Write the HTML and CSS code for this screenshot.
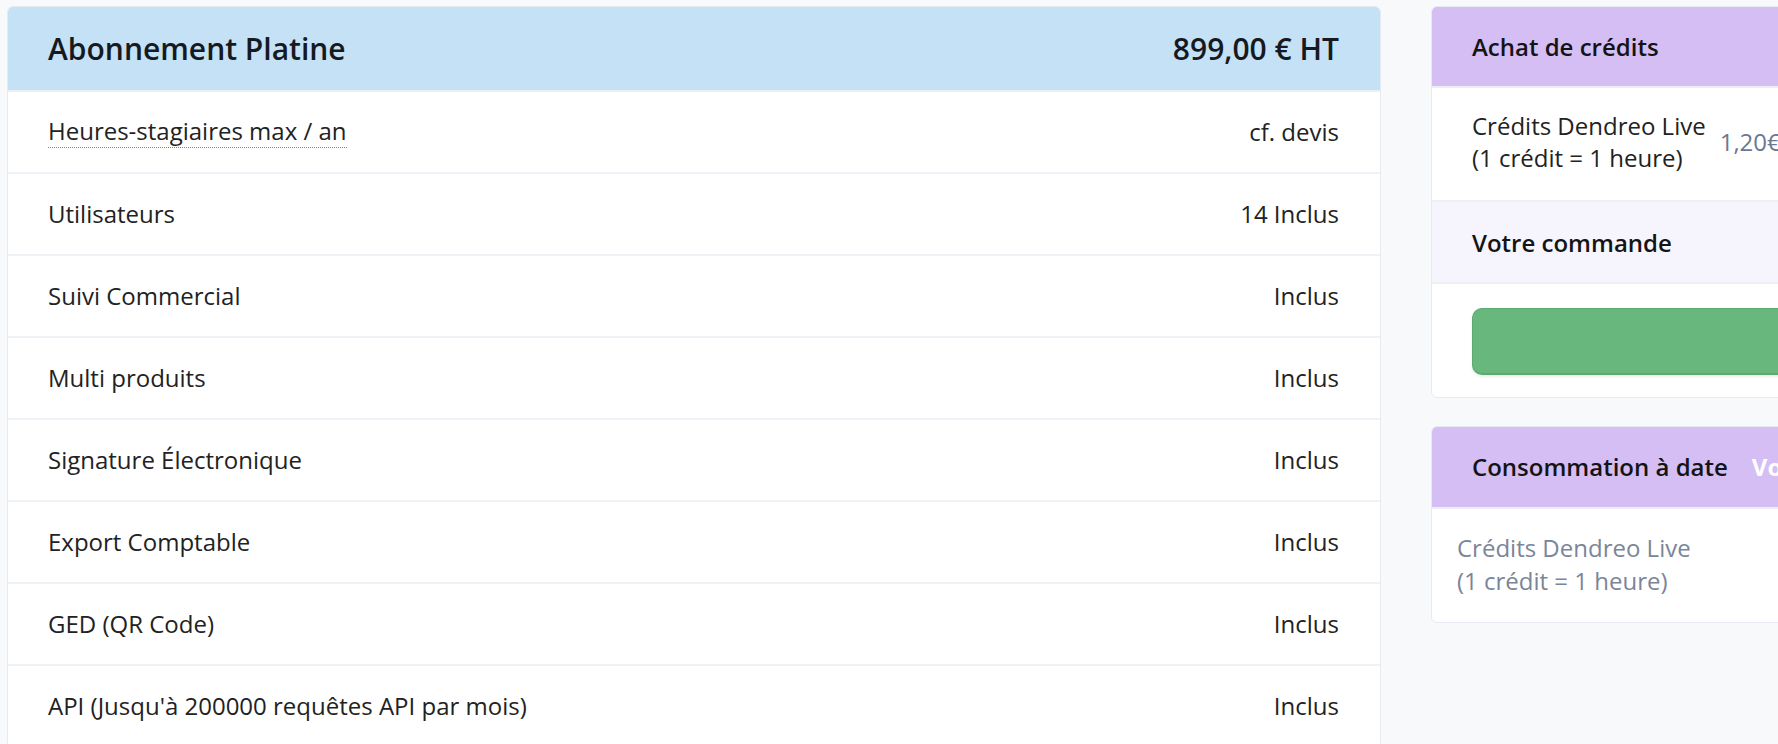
FILE: index.html
```html
<!DOCTYPE html>
<html lang="fr">
<head>
<meta charset="utf-8">
<title>Abonnement</title>
<link rel="stylesheet" href="styles.css">
</head>
<body>
<div class="page">
  <section class="plan">
    <div class="plan-head">
      <span class="plan-name">Abonnement Platine</span>
      <span class="plan-price">899,00 € HT</span>
    </div>
    <div class="plan-row"><span class="hint">Heures-stagiaires max / an</span><span class="val">cf. devis</span></div>
    <div class="plan-row"><span>Utilisateurs</span><span class="val">14 Inclus</span></div>
    <div class="plan-row"><span>Suivi Commercial</span><span class="val">Inclus</span></div>
    <div class="plan-row"><span>Multi produits</span><span class="val">Inclus</span></div>
    <div class="plan-row"><span>Signature Électronique</span><span class="val">Inclus</span></div>
    <div class="plan-row"><span>Export Comptable</span><span class="val">Inclus</span></div>
    <div class="plan-row"><span>GED (QR Code)</span><span class="val">Inclus</span></div>
    <div class="plan-row"><span>API (Jusqu'à 200000 requêtes API par mois)</span><span class="val">Inclus</span></div>
  </section>
  <aside class="side">
    <div class="card">
      <div class="card-head">Achat de crédits</div>
      <div class="credit-row">
        <div class="credit-label">Crédits Dendreo Live<br>(1 crédit = 1 heure)</div>
        <div class="credit-price">1,20€</div>
      </div>
      <div class="order-head">Votre commande</div>
      <div class="order-body"><button class="order-btn" type="button">Commander</button></div>
    </div>
    <div class="card card-usage">
      <div class="card-head">Consommation à date <a class="head-link" href="#">Voir le détail</a></div>
      <div class="usage-body">Crédits Dendreo Live<br>(1 crédit = 1 heure)</div>
    </div>
  </aside>
</div>
</body>
</html>
```

FILE: styles.css
```css
html, body {
  margin: 0;
  padding: 0;
  overflow: hidden;
  background: #f7f9fb;
  font-family: "Open Sans", "Liberation Sans", sans-serif;
  color: #212529;
}

.page {
  display: flex;
  align-items: flex-start;
  gap: 50px;
  padding: 6px 0 0 7px;
}

/* Left plan table */
.plan {
  flex: 0 0 1374px;
  box-sizing: border-box;
  background: #fff;
  border: 1px solid #e7ebf1;
  border-radius: 6px;
  overflow: hidden;
}

.plan-head {
  display: flex;
  justify-content: space-between;
  align-items: center;
  height: 83px;
  padding: 0 41px 0 40px;
  background: #c5e1f6;
  border-bottom: 2px solid #eceef5;
  font-size: 30px;
  font-weight: 600;
  color: #161a1f;
}

.plan-row {
  display: flex;
  justify-content: space-between;
  align-items: center;
  height: 78px;
  padding: 0 41px 2px 40px;
  border-bottom: 2px solid #eef2f7;
  font-size: 24px;
  color: #222;
}

.hint {
  border-bottom: 1px dotted #74819b;
}

/* Right column */
.side {
  flex: 0 0 900px;
  display: flex;
  flex-direction: column;
  gap: 28px;
}

.card {
  background: #fff;
  border: 1px solid #e7ebf1;
  border-radius: 6px;
  overflow: hidden;
}

.card-head {
  display: flex;
  align-items: center;
  height: 79px;
  padding: 0 40px;
  background: #d4bef4;
  border-bottom: 2px solid #eceef5;
  font-size: 24px;
  font-weight: 600;
  color: #141414;
}

.card-usage .card-head {
  height: 80px;
  padding-bottom: 2px;
  height: 78px;
}

.head-link {
  margin-left: 24px;
  color: #fff;
  font-weight: 700;
  text-decoration: none;
}

.credit-row {
  display: flex;
  align-items: center;
  gap: 14px;
  padding: 22px 40px 26px;
  border-bottom: 2px solid #eef0f6;
  font-size: 24px;
  line-height: 32px;
  color: #222;
}

.credit-price {
  color: #6b7891;
}

.order-head {
  display: flex;
  align-items: center;
  height: 80px;
  padding: 0 40px;
  background: #f6f4fd;
  border-bottom: 2px solid #eef0f5;
  font-size: 24px;
  font-weight: 600;
  color: #141414;
}

.order-body {
  padding: 24px 40px 22px;
}

.order-btn {
  display: block;
  width: 100%;
  height: 67px;
  border: 1px solid #5ea873;
  border-bottom-width: 2px;
  border-radius: 10px;
  background: #68b87e;
  color: #fff;
  font-family: inherit;
  font-size: 24px;
  font-weight: 600;
  box-shadow: 0 2px 3px rgba(0, 0, 0, 0.08);
}

.usage-body {
  padding: 22px 25px 25px;
  font-size: 24px;
  line-height: 33px;
  color: #7b8599;
}
```
